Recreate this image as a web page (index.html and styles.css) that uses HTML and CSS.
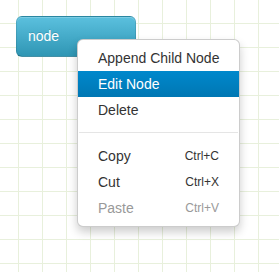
FILE: index.html
```html
<!DOCTYPE html>
<html>
<head>
<meta charset="utf-8">
<link rel="stylesheet" href="styles.css">
</head>
<body>
<div class="canvas">
  <div class="node">node</div>
  <ul class="menu">
    <li class="item">Append Child Node</li>
    <li class="item active">Edit Node</li>
    <li class="item">Delete</li>
    <li class="divider"></li>
    <li class="item"><span>Copy</span><span class="key">Ctrl+C</span></li>
    <li class="item"><span>Cut</span><span class="key">Ctrl+X</span></li>
    <li class="item disabled"><span>Paste</span><span class="key">Ctrl+V</span></li>
  </ul>
</div>
</body>
</html>
```
FILE: styles.css
```css
html, body {
  margin: 0;
  padding: 0;
}
body {
  font-family: "Liberation Sans", Arial, sans-serif;
  font-size: 14px;
  color: #333;
}
.canvas {
  position: relative;
  width: 279px;
  height: 272px;
  overflow: hidden;
  background-color: #fff;
  background-image:
    linear-gradient(to right, transparent 18px, #e8f0dc 18px, #e8f0dc 19px, transparent 19px),
    linear-gradient(to bottom, transparent 23px, #e8f0dc 23px, #e8f0dc 24px, transparent 24px);
  background-size: 24px 24px;
}
.node {
  position: absolute;
  left: 16px;
  top: 16px;
  width: 120px;
  height: 41px;
  box-sizing: border-box;
  padding: 0 11px;
  line-height: 39px;
  color: #fff;
  font-size: 14px;
  background-color: #49afcd;
  background-image: linear-gradient(to bottom, #5bc0de, #2f96b4);
  border: 1px solid rgba(0, 0, 0, 0.1);
  border-bottom-color: rgba(0, 0, 0, 0.25);
  border-radius: 6px;
  box-shadow: inset 0 1px 0 rgba(255, 255, 255, 0.2);
  text-shadow: 0 -1px 0 rgba(0, 0, 0, 0.15);
}
.menu {
  position: absolute;
  left: 77px;
  top: 39px;
  width: 163px;
  box-sizing: border-box;
  margin: 0;
  padding: 5px 0;
  list-style: none;
  background: #fff;
  border: 1px solid rgba(0, 0, 0, 0.2);
  border-radius: 6px;
  box-shadow: 0 5px 10px rgba(0, 0, 0, 0.2);
}
.item {
  display: flex;
  justify-content: space-between;
  align-items: center;
  padding: 3px 20px;
  line-height: 20px;
  color: #333;
  white-space: nowrap;
}
.item.active {
  color: #fff;
  background-color: #0081c2;
  background-image: linear-gradient(to bottom, #0088cc, #0077b3);
}
.item.disabled {
  color: #999;
}
.key {
  font-size: 12px;
}
.divider {
  height: 1px;
  margin: 9px 1px;
  background: #e5e5e5;
  border-bottom: 1px solid #fff;
}
```
